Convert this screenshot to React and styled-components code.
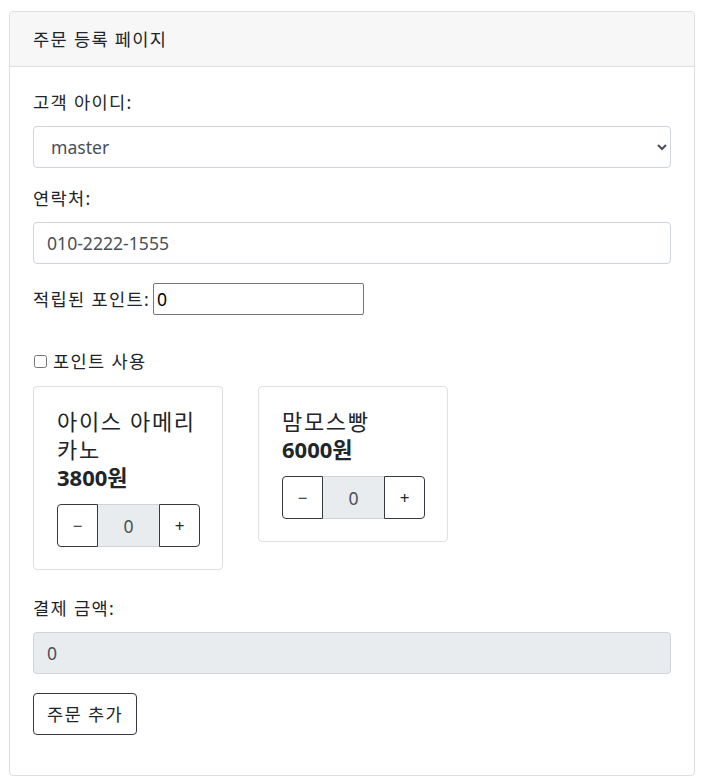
import React, { useState } from "react";
import styled, { createGlobalStyle } from "styled-components";

const GlobalStyle = createGlobalStyle`
  * { box-sizing: border-box; }
  body {
    margin: 0;
    background: #fff;
    color: #212529;
    font-family: "Segoe UI", "Noto Sans", "Noto Sans CJK KR", sans-serif;
    font-size: 17.6px;
    line-height: 1.5;
  }
`;

const Page = styled.div`
  padding: 11px 7px 2px 9px;
`;

const Card = styled.div`
  border: 1px solid #dfdfdf;
  border-radius: 4px;
  background: #fff;
`;

const CardHeader = styled.div`
  background: #f7f7f7;
  border-bottom: 1px solid #dfdfdf;
  padding: 14px 23px 14px 23px;
  line-height: 26px;
  letter-spacing: 0.075em;
  border-radius: 4px 4px 0 0;
`;

const CardBody = styled.form`
  padding: 22px 23px 22px 23px;
  display: flex;
  flex-direction: column;
  align-items: stretch;
`;

const Group = styled.div`
  display: flex;
  flex-direction: column;
  margin-bottom: ${(p) => p.$mb ?? 17}px;
`;

const Label = styled.label`
  line-height: 26px;
  margin-bottom: 11px;
  letter-spacing: 0.075em;
`;

const Control = styled.input`
  height: 42px;
  padding: 6px 13px;
  border: 1px solid #ced4da;
  border-radius: 4px;
  font: inherit;
  color: #495057;
  background: ${(p) => (p.disabled ? "#e9ecef" : "#fff")};
  outline: none;
`;

const Select = styled.select`
  height: 42px;
  padding: 6px 9px 6px 13px;
  border: 1px solid #ced4da;
  border-radius: 4px;
  font: inherit;
  color: #495057;
  background: #fff;
  outline: none;
`;

const InlineRow = styled.div`
  display: flex;
  align-items: center;
  line-height: 26px;
  margin-top: ${(p) => p.$mt ?? 0}px;
  margin-bottom: ${(p) => p.$mb ?? 0}px;
`;

const RowText = styled.span`
  letter-spacing: 0.075em;
`;

const PlainInput = styled.input`
  width: 211px;
  height: 32px;
  margin-left: 3px;
  padding: 1px 3px;
  border: 1px solid #767676;
  border-radius: 2px;
  font: inherit;
  color: #000;
  outline: none;
`;

const Check = styled.input`
  width: 13px;
  height: 13px;
  margin: 0 6px 0 1px;
`;

const Products = styled.div`
  display: flex;
  align-items: flex-start;
  gap: 35px;
  margin-bottom: 25px;
`;

const ProductCard = styled.div`
  width: 190px;
  border: 1px solid #dfdfdf;
  border-radius: 4px;
  padding: 20px 22px 22px 23px;
`;

const ProductName = styled.div`
  font-size: 22px;
  line-height: 28px;
  letter-spacing: 0.075em;
`;

const Price = styled.div`
  font-size: 22px;
  line-height: 28px;
  font-weight: 700;
  margin-bottom: 13px;
`;

const Stepper = styled.div`
  display: flex;
  height: 43px;
`;

const StepButton = styled.button`
  width: 42px;
  height: 43px;
  border: 1px solid #343a40;
  border-radius: ${(p) => (p.$side === "left" ? "4px 0 0 4px" : "0 4px 4px 0")};
  background: #fff;
  color: #212529;
  font-family: "Segoe UI", "Noto Sans", sans-serif;
  font-size: 17px;
  padding: 0;
  cursor: pointer;
`;

const StepValue = styled.input`
  width: 61px;
  height: 43px;
  border: 1px solid #ced4da;
  border-left: none;
  border-right: none;
  background: #e9ecef;
  color: #495057;
  text-align: center;
  font: inherit;
  outline: none;
`;

const OutlineButton = styled.button`
  align-self: flex-start;
  height: 42px;
  padding: 6px 13px;
  border: 1px solid #343a40;
  border-radius: 4px;
  background: #fff;
  color: #212529;
  font: inherit;
  letter-spacing: 0.075em;
  margin-bottom: 18px;
  cursor: pointer;
`;

const products = [
  { id: 1, name: "아이스 아메리카노", price: 3800 },
  { id: 2, name: "맘모스빵", price: 6000 },
];

export default function App() {
  const [counts, setCounts] = useState({ 1: 0, 2: 0 });
  const change = (id, d) =>
    setCounts((c) => ({ ...c, [id]: Math.max(0, c[id] + d) }));

  return (
    <Page>
      <GlobalStyle />
      <Card>
        <CardHeader>주문 등록 페이지</CardHeader>
        <CardBody onSubmit={(e) => e.preventDefault()}>
          <Group>
            <Label>고객 아이디:</Label>
            <Select defaultValue="master">
              <option value="master">master</option>
            </Select>
          </Group>
          <Group>
            <Label>연락처:</Label>
            <Control defaultValue="010-2222-1555" />
          </Group>
          <InlineRow $mt={2} $mb={33}>
            <RowText>적립된 포인트:</RowText>
            <PlainInput defaultValue="0" />
          </InlineRow>
          <InlineRow $mb={12}>
            <Check type="checkbox" />
            <RowText>포인트 사용</RowText>
          </InlineRow>
          <Products>
            {products.map((p) => (
              <ProductCard key={p.id}>
                <ProductName>{p.name}</ProductName>
                <Price>{p.price}원</Price>
                <Stepper>
                  <StepButton type="button" $side="left" onClick={() => change(p.id, -1)}>
                    −
                  </StepButton>
                  <StepValue readOnly value={counts[p.id]} />
                  <StepButton type="button" $side="right" onClick={() => change(p.id, 1)}>
                    +
                  </StepButton>
                </Stepper>
              </ProductCard>
            ))}
          </Products>
          <Group $mb={19}>
            <Label>결제 금액:</Label>
            <Control disabled value="0" readOnly />
          </Group>
          <OutlineButton type="submit">주문 추가</OutlineButton>
        </CardBody>
      </Card>
    </Page>
  );
}
